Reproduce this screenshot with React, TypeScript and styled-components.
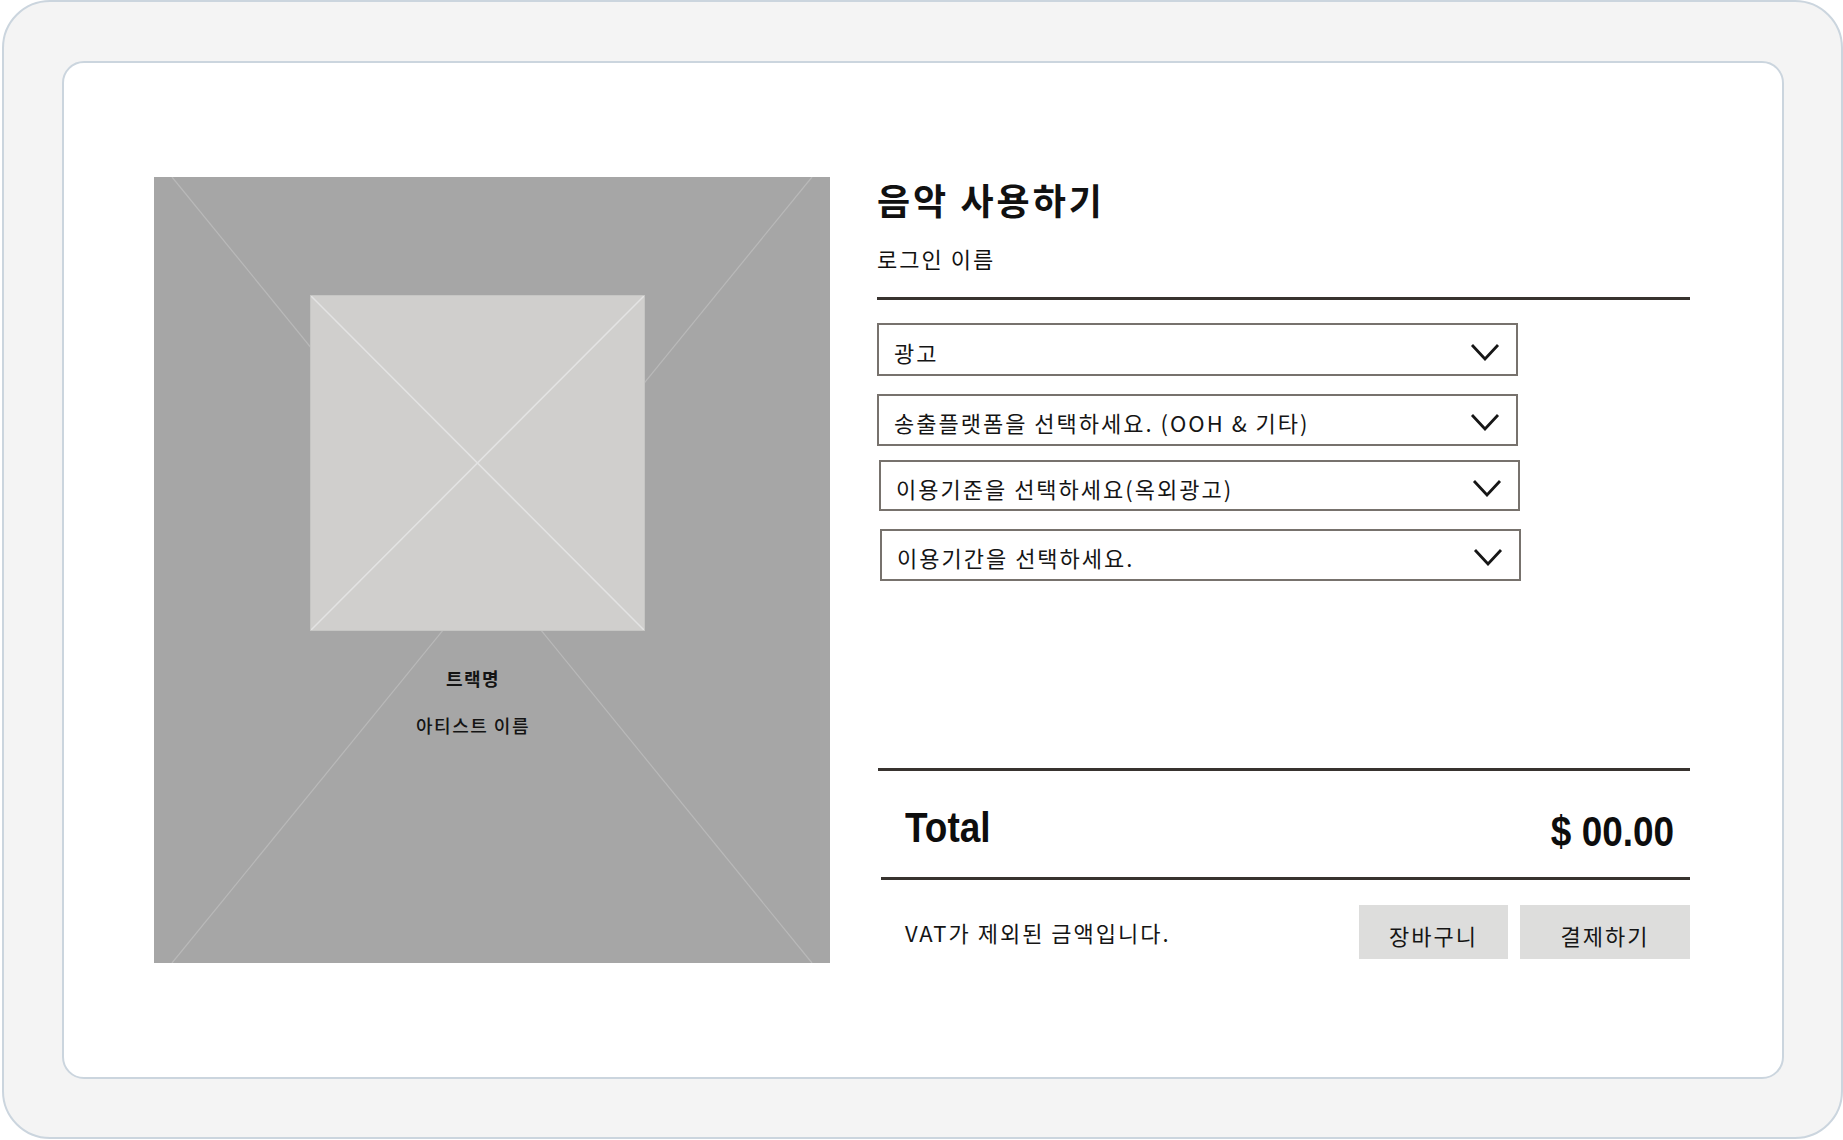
import styled, { createGlobalStyle } from "styled-components"

const GlobalStyle = createGlobalStyle`
  html, body {
    margin: 0;
    padding: 0;
    background: #ffffff;
  }
  body {
    font-family: "Noto Sans CJK KR", "Noto Sans", sans-serif;
    color: #111111;
  }
`

const Frame = styled.div`
  box-sizing: border-box;
  width: 1841px;
  height: 1139px;
  margin-left: 2px;
  padding: 59px 57px 58px 58px;
  background: #f4f4f4;
  border: 2px solid #cbd5de;
  border-radius: 48px;
`

const Card = styled.div`
  box-sizing: border-box;
  height: 100%;
  display: flex;
  gap: 47px;
  padding: 114px 92px 114px 90px;
  background: #ffffff;
  border: 2px solid #cbd5de;
  border-radius: 22px;
`

const Cover = styled.div`
  position: relative;
  flex: none;
  width: 676px;
  height: 786px;
  display: flex;
  flex-direction: column;
  align-items: center;
  box-sizing: border-box;
  padding: 119px 30px 0 0;
  background: #a6a6a6;
`

const CoverLines = styled.svg`
  position: absolute;
  inset: 0;
  width: 100%;
  height: 100%;
`

const Artwork = styled.div`
  position: relative;
  width: 333px;
  height: 334px;
  background: #d0cfcd;
  box-shadow: 0 0 0 1px #c6c6c4;
`

const ArtworkLines = styled.svg`
  display: block;
  width: 100%;
  height: 100%;
`

const CoverText = styled.div<{ $gap: number; $weight: number }>`
  position: relative;
  margin-top: ${(p) => p.$gap}px;
  margin-right: 8px;
  font-size: 18px;
  line-height: 24px;
  letter-spacing: 1.5px;
  font-weight: ${(p) => p.$weight};
  color: #141414;
`

const Side = styled.div`
  flex: 1;
  display: flex;
  flex-direction: column;
`

const Title = styled.h1`
  margin: 0;
  font-size: 36px;
  line-height: 44px;
  letter-spacing: 3px;
  font-weight: 700;
  color: #111111;
`

const UserName = styled.div`
  margin-top: 22px;
  font-size: 22px;
  line-height: 30px;
  letter-spacing: 2px;
`

const Rule = styled.div<{ $top?: number; $inset?: number }>`
  margin-top: ${(p) => p.$top ?? 0}px;
  margin-left: ${(p) => p.$inset ?? 0}px;
  border-top: 3px solid #38332f;
`

const Selects = styled.div`
  margin-top: 23px;
  display: flex;
  flex-direction: column;
`

const Select = styled.div<{ $top: number; $shift: number; $h: number }>`
  box-sizing: border-box;
  width: 641px;
  height: ${(p) => p.$h}px;
  margin-top: ${(p) => p.$top}px;
  margin-left: ${(p) => p.$shift}px;
  display: flex;
  align-items: center;
  justify-content: space-between;
  padding: 4px 16px 0 15px;
  border: 2px solid #77726d;
  font-size: 22px;
  letter-spacing: 2px;
  color: #151515;
`

const Chevron = styled.svg`
  flex: none;
  width: 30px;
  height: 18px;
  margin-top: 0;
`

const Summary = styled.div`
  margin-top: auto;
  display: flex;
  flex-direction: column;
  padding-bottom: 4px;
`

const TotalRow = styled.div`
  height: 106px;
  box-sizing: border-box;
  display: flex;
  align-items: center;
  justify-content: space-between;
  padding: 8px 16px 0 28px;
  font-family: "Liberation Sans", Arial, sans-serif;
  font-weight: 700;
  font-size: 42px;
  color: #0d0d0d;
`

const Narrow = styled.span<{ $origin: "left" | "right"; $drop?: number }>`
  display: inline-block;
  padding-top: ${(p) => p.$drop ?? 0}px;
  transform: scaleX(0.88);
  transform-origin: ${(p) => p.$origin} center;
`

const Footer = styled.div`
  margin-top: 25px;
  display: flex;
  align-items: center;
  padding-left: 28px;
`

const Note = styled.div`
  flex: 1;
  font-size: 22px;
  letter-spacing: 2px;
  color: #151515;
`

const Buttons = styled.div`
  display: flex;
  gap: 12px;
`

const ActionButton = styled.button<{ $w: number }>`
  width: ${(p) => p.$w}px;
  height: 54px;
  padding: 6px 0 0;
  border: none;
  background: #dddddc;
  font-family: "Noto Sans CJK KR", sans-serif;
  font-size: 22px;
  letter-spacing: 2px;
  color: #151515;
`

const options = [
  { label: "광고", top: 0, shift: 0, h: 53 },
  { label: "송출플랫폼을 선택하세요. (OOH & 기타)", top: 18, shift: 0, h: 52 },
  { label: "이용기준을 선택하세요(옥외광고)", top: 14, shift: 2, h: 51 },
  { label: "이용기간을 선택하세요.", top: 18, shift: 3, h: 52 },
]

const ChevronIcon = () => (
  <Chevron viewBox="0 0 30 18">
    <polyline points="2,2 15,16 28,2" fill="none" stroke="#161616" strokeWidth="2.8" />
  </Chevron>
)

export default function App() {
  return (
    <>
      <GlobalStyle />
      <Frame>
        <Card>
          <Cover>
            <CoverLines viewBox="0 0 676 786" preserveAspectRatio="none">
              <line x1="18" y1="0" x2="658" y2="786" stroke="#b9b9b9" strokeWidth="1.2" />
              <line x1="658" y1="0" x2="18" y2="786" stroke="#b9b9b9" strokeWidth="1.2" />
            </CoverLines>
            <Artwork>
              <ArtworkLines viewBox="0 0 333 334" preserveAspectRatio="none">
                <line x1="0" y1="0" x2="333" y2="334" stroke="#e3e3e3" strokeWidth="1.5" />
                <line x1="333" y1="0" x2="0" y2="334" stroke="#e3e3e3" strokeWidth="1.5" />
              </ArtworkLines>
            </Artwork>
            <CoverText $gap={36} $weight={700}>트랙명</CoverText>
            <CoverText $gap={23} $weight={500}>아티스트 이름</CoverText>
          </Cover>
          <Side>
            <Title>음악 사용하기</Title>
            <UserName>로그인 이름</UserName>
            <Rule $top={24} />
            <Selects>
              {options.map((o) => (
                <Select key={o.label} $top={o.top} $shift={o.shift} $h={o.h}>
                  <span>{o.label}</span>
                  <ChevronIcon />
                </Select>
              ))}
            </Selects>
            <Summary>
              <Rule $inset={1} />
              <TotalRow>
                <Narrow $origin="left">Total</Narrow>
                <Narrow $origin="right" $drop={7}>$ 00.00</Narrow>
              </TotalRow>
              <Rule $inset={4} />
              <Footer>
                <Note>VAT가 제외된 금액입니다.</Note>
                <Buttons>
                  <ActionButton $w={149}>장바구니</ActionButton>
                  <ActionButton $w={170}>결제하기</ActionButton>
                </Buttons>
              </Footer>
            </Summary>
          </Side>
        </Card>
      </Frame>
    </>
  )
}
